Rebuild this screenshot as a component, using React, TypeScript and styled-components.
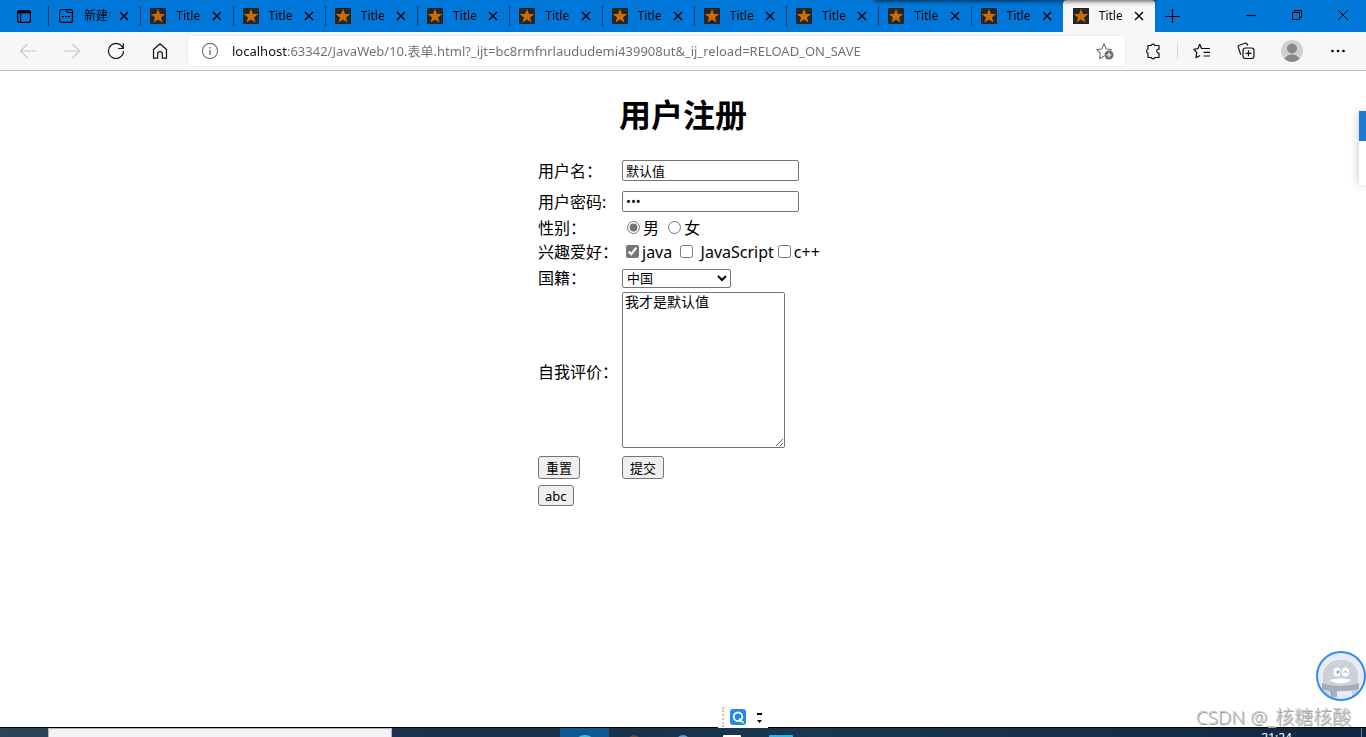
import React from "react";
import styled, { createGlobalStyle } from "styled-components";

const uiFont = `"Noto Sans", "Noto Sans CJK SC", sans-serif`;

const GlobalStyle = createGlobalStyle`
  *, *::before, *::after { box-sizing: border-box; }
  body { margin: 0; background: #fff; color: #000; font-family: ${uiFont}; font-size: 16px; }
`;

const Screen = styled.div`
  position: relative;
  display: flex;
  flex-direction: column;
  height: 100vh;
  overflow: hidden;
`;

/* ---------- tab strip ---------- */

const TitleBar = styled.header`
  display: flex;
  height: 32px;
  flex: none;
  background: #0078d9;
`;

const BareButton = styled.button`
  display: flex;
  align-items: center;
  justify-content: center;
  flex: none;
  padding: 0;
  border: 0;
  background: none;
  color: inherit;
`;

const TabActionsButton = styled(BareButton)`
  width: 48px;
`;

const TabList = styled.div`
  display: grid;
  grid-template-columns: repeat(12, minmax(0, 1fr));
  flex: 1;
  min-width: 0;
`;

const Tab = styled.div<{ $active?: boolean }>`
  position: relative;
  display: flex;
  align-items: center;
  padding: 0 9px;
  border-radius: 4px 4px 0 0;
  background: ${(p) => (p.$active ? "#f7f7f7" : "transparent")};
  font-size: 12px;
  line-height: 16px;

  &::before {
    content: "";
    position: absolute;
    left: 0;
    top: 6px;
    width: 1px;
    height: 20px;
    background: ${(p) => (p.$active ? "transparent" : "#0b3d6b")};
  }
`;

const TabIcon = styled.span`
  display: flex;
  flex: none;
  width: 18px;
  justify-content: center;
`;

const TabTitle = styled.span`
  flex: 1;
  min-width: 0;
  margin-left: 9px;
  overflow: hidden;
  white-space: nowrap;
  mask-image: linear-gradient(to right, #000 80%, transparent);
`;

const TabClose = styled(BareButton)`
  width: 14px;
  height: 16px;
  margin-left: 6px;
`;

const NewTabButton = styled(BareButton)`
  width: 34px;
`;

const WindowControls = styled.div`
  display: flex;
  flex: none;
  height: 29px;
  margin-left: 39px;
`;

const WindowButton = styled(BareButton)`
  width: 46px;
`;

const WindowShadow = styled.div`
  position: absolute;
  top: -4px;
  right: 211px;
  width: 280px;
  height: 4px;
  box-shadow: 0 0 5px 1px rgba(0, 0, 0, 0.7);
`;

/* ---------- toolbar ---------- */

const Toolbar = styled.nav`
  display: flex;
  align-items: center;
  flex: none;
  height: 39px;
  padding: 0 6px;
  border-bottom: 1px solid #bcbcbc;
  background: #f7f7f7;
`;

const ToolButton = styled(BareButton)<{ $faded?: boolean }>`
  width: 44px;
  height: 32px;
  color: ${(p) => (p.$faded ? "#c8c8c8" : "#111")};
`;

const ProfileButton = styled(ToolButton)`
  width: 48px;
`;

const AddressBar = styled.div`
  display: flex;
  align-items: center;
  flex: 1;
  min-width: 0;
  height: 30px;
  margin: 0 6px;
  border-radius: 4px;
  background: #fff;
  box-shadow: 0 0 3px rgba(0, 0, 0, 0.08);
`;

const SiteInfoButton = styled(BareButton)`
  width: 44px;
  height: 30px;
`;

const AddFavoriteButton = styled(BareButton)`
  width: 40px;
  height: 30px;
`;

const AddressInput = styled.input`
  flex: 1;
  min-width: 0;
  height: 24px;
  padding: 0 0 2px;
  border: 0;
  outline: 0;
  color: #6d6d6d;
  font-family: ${uiFont};
  font-size: 13px;
  background: linear-gradient(to right, #111 56px, #6d6d6d 56px);
  background-clip: text;
  -webkit-text-fill-color: transparent;
`;

const ToolDivider = styled.span`
  width: 1px;
  height: 16px;
  margin: 0 2px;
  background: #d4d4d4;
`;

/* ---------- page ---------- */

const Page = styled.main`
  display: flex;
  flex-direction: column;
  align-items: center;
  flex: 1;
  min-height: 0;
  overflow: hidden;
`;

const Heading = styled.h1`
  margin: 22px 0 18px;
  font-size: 32px;
  line-height: 44px;
`;

const FormTable = styled.table`
  width: 290px;
  border-collapse: collapse;
  line-height: 20px;
`;

const Row = styled.tr<{ $height: number }>`
  height: ${(p) => p.$height}px;
`;

const Cell = styled.td<{ $top?: boolean }>`
  padding: ${(p) => (p.$top ? "1px 0 0" : "0")};
  vertical-align: ${(p) => (p.$top ? "top" : "middle")};
  white-space: nowrap;
`;

const LabelCell = styled(Cell)`
  width: 84px;
`;

const TextInput = styled.input`
  display: block;
  width: 177px;
  height: 21px;
  padding: 0 2px 1px 3px;
  border: 1px solid #767676;
  border-radius: 2px;
  font-family: ${uiFont};
  font-size: 13px;
`;

const Choice = styled.input`
  accent-color: #767676;
`;

const CountrySelect = styled.select`
  display: block;
  width: 109px;
  height: 19px;
  padding: 0;
  border: 1px solid #767676;
  border-radius: 2px;
  background: #fff;
  color: #000;
  font-family: "Liberation Sans", "Noto Sans CJK SC", sans-serif;
  font-size: 13px;
`;

const Comment = styled.textarea`
  display: block;
  width: 163px;
  height: 156px;
  padding: 2px;
  border: 1px solid #767676;
  border-radius: 2px;
  font-family: "Liberation Mono", "Noto Sans CJK SC", monospace;
  font-size: 14px;
  line-height: 16px;
`;

const FormButton = styled.button`
  display: block;
  height: 23px;
  padding: 0 6px;
  border: 1px solid #767676;
  border-radius: 3px;
  background: #efefef;
  color: #000;
  font-family: ${uiFont};
  font-size: 13px;
  line-height: 20px;
`;

const ActionButton = styled(FormButton)`
  padding: 0 7px;
`;

const ShortButton = styled(FormButton)`
  height: 21px;
  line-height: 18px;
`;

/* ---------- floating pieces ---------- */

const SidePanel = styled.aside`
  position: absolute;
  top: 111px;
  right: 0;
  width: 7px;
  height: 74px;
  border-top: 30px solid #1a7bd4;
  background: #fff;
  box-shadow: 0 0 8px rgba(0, 0, 0, 0.25);
`;

const Mascot = styled.div`
  position: absolute;
  right: 0;
  bottom: 36px;
  width: 50px;
  height: 50px;
`;

const Watermark = styled.div`
  position: absolute;
  right: 15px;
  bottom: 8px;
  color: #c6c6c6;
  font-size: 19px;
  font-weight: 300;
  line-height: 24px;
  text-shadow: 1px 1px 0 #9a9a9a;
  white-space: nowrap;
`;

const ImeBar = styled.div`
  position: absolute;
  left: calc(50% + 35px);
  bottom: 9px;
  display: flex;
  align-items: center;
  width: 50px;
  height: 22px;
  padding-left: 4px;
  background: #fff;
`;

const ImeGrip = styled.span`
  height: 20px;
  margin-right: 6px;
  border-left: 2px dotted #c4c4c4;
`;

/* ---------- taskbar ---------- */

const Taskbar = styled.footer`
  display: flex;
  flex: none;
  height: 10px;
  overflow: hidden;
  border-top: 1px solid #000;
  background: linear-gradient(to right, #2b4459, #17304c 35%, #1b3650 60%, #0f2742);
`;

const TaskSearch = styled.div`
  width: 344px;
  height: 40px;
  margin-left: 48px;
  border: 1px solid #b5b5b5;
  background: #f2f3f6;
`;

const TaskApps = styled.div`
  display: flex;
  margin-left: 168px;
`;

const TaskApp = styled.span<{ $active?: boolean }>`
  display: flex;
  justify-content: center;
  width: 49px;
  padding-top: 7px;
  background: ${(p) => (p.$active ? "#0f5893" : "transparent")};
`;

const TaskGlyph = styled.span<{ $color: string; $width: number; $square?: boolean }>`
  width: ${(p) => p.$width}px;
  height: 24px;
  border-radius: ${(p) => (p.$square ? "1px" : "8px")};
  background: ${(p) => p.$color};
`;

const Clock = styled.time`
  margin-left: auto;
  padding-top: 2px;
  color: #fff;
  font-size: 12px;
  line-height: 16px;
`;

const DesktopEdge = styled.span`
  width: 5px;
  margin-left: 69px;
  border-left: 1px solid #6c7c8c;
`;

const Icon = ({ size = 18, children }: { size?: number; children: React.ReactNode }) => (
  <svg
    width={size}
    height={size}
    viewBox={`0 0 ${size} ${size}`}
    fill="none"
    stroke="currentColor"
    strokeWidth="1.2"
    strokeLinejoin="round"
    aria-hidden="true"
  >
    {children}
  </svg>
);

const StarFavicon = () => (
  <svg width="16" height="16" viewBox="0 0 16 16" aria-hidden="true">
    <rect width="16" height="16" fill="#252525" />
    <path d="M8 .8l1.900 5.100 5.300.2-4.200 3.300 1.500 5.200L8 11.600l-4.500 3 1.500-5.200L.8 6.100l5.300-.2z" fill="#cc6c08" />
  </svg>
);

const NewPageIcon = () => (
  <Icon size={16}>
    <rect x="1.6" y="1.6" width="12.8" height="12.8" rx="2" />
    <path d="M8.500 1.600v1.400q0 1.500 1.500 1.500h4.400M4 8.700h2M7 8.700h2M10 8.700h2" />
  </Icon>
);

const CloseIcon = () => (
  <Icon size={10}>
    <path d="M1 1l8 8M9 1L1 9" strokeWidth="1.4" />
  </Icon>
);

const titles = ["新建标签页", ...Array.from({ length: 11 }, () => "Title")];

export default function App() {
  return (
    <>
      <GlobalStyle />
      <Screen>
        <TitleBar>
          <TabActionsButton aria-label="Tab actions">
            <Icon size={16}>
              <rect x="1.6" y="2.6" width="12.8" height="11.8" rx="2" />
              <path d="M2 4h12" strokeWidth="2.6" />
              <path d="M4.6 5v9" />
            </Icon>
          </TabActionsButton>
          <TabList>
            {titles.map((title, i) => (
              <Tab key={i} $active={i === titles.length - 1}>
                <TabIcon>{i === 0 ? <NewPageIcon /> : <StarFavicon />}</TabIcon>
                <TabTitle>{title}</TabTitle>
                <TabClose aria-label="Close tab">
                  <CloseIcon />
                </TabClose>
              </Tab>
            ))}
          </TabList>
          <NewTabButton aria-label="New tab">
            <Icon size={16}>
              <path d="M8.5 1v14M1 8.5h15" />
            </Icon>
          </NewTabButton>
          <WindowControls>
            <WindowButton aria-label="Minimize">
              <Icon size={12}>
                <path d="M1 6.5h10" />
              </Icon>
            </WindowButton>
            <WindowButton aria-label="Restore">
              <Icon size={12}>
                <path d="M1.5 3.5h7v7h-7zM3.5 3.5v-2h7v7h-2" strokeWidth="1" />
              </Icon>
            </WindowButton>
            <WindowButton aria-label="Close">
              <Icon size={12}>
                <path d="M1 1l10 10M11 1L1 11" strokeWidth="1" />
              </Icon>
            </WindowButton>
          </WindowControls>
        </TitleBar>
        <WindowShadow />

        <Toolbar>
          <ToolButton $faded aria-label="Back">
            <Icon>
              <path d="M17 9H1.5M8.5 2l-7 7 7 7" />
            </Icon>
          </ToolButton>
          <ToolButton $faded aria-label="Forward">
            <Icon>
              <path d="M1 9h15.500M9.500 2l7 7-7 7" />
            </Icon>
          </ToolButton>
          <ToolButton aria-label="Refresh">
            <Icon>
              <path d="M16.300 7.200A7.500 7.500 0 1 0 16.500 9M16.300 1.500v5h-5" />
            </Icon>
          </ToolButton>
          <ToolButton aria-label="Home">
            <Icon>
              <path d="M2.500 7.500L9 1.800l6.500 5.700v8.700h-4.200v-4.500c0-1.300-.8-2-2.300-2s-2.300.7-2.300 2v4.500H2.500z" />
            </Icon>
          </ToolButton>
          <AddressBar>
            <SiteInfoButton aria-label="Site information">
              <svg width="18" height="18" viewBox="0 0 18 18" fill="none" stroke="#767676" aria-hidden="true">
                <circle cx="9" cy="9" r="7.600" strokeWidth="1.200" />
                <path d="M9 8v5M9 5v1.500" strokeWidth="1.500" />
              </svg>
            </SiteInfoButton>
            <AddressInput
              aria-label="Address"
              defaultValue="localhost:63342/JavaWeb/10.表单.html?_ijt=bc8rmfnrlaududemi439908ut&_ij_reload=RELOAD_ON_SAVE"
            />
            <AddFavoriteButton aria-label="Add to favorites">
              <svg width="18" height="18" viewBox="0 0 18 18" fill="none" stroke="#767676" aria-hidden="true">
                <path
                  d="M8 14.200l-4.500 2.300.9-5L.8 7.700l5-.7L8 1.800 10.300 7l5 .7-1 1"
                  strokeWidth="1.200"
                  strokeLinejoin="round"
                />
                <circle cx="13" cy="13" r="4.500" fill="#6b6b6b" stroke="none" />
                <path d="M13 10.500v5M10.500 13h5" stroke="#fff" strokeWidth="1.200" />
              </svg>
            </AddFavoriteButton>
          </AddressBar>
          <ToolButton aria-label="Extensions">
            <Icon>
              <path d="M4 3.500h3.200a2 2 0 0 1 3.800 0h4v3.700h-1a2 2 0 0 0 0 3.800h1v4.500h-4a2 2 0 0 1-3.800 0H4v-4.300a2.100 2.100 0 0 1 0-4z" />
            </Icon>
          </ToolButton>
          <ToolDivider />
          <ToolButton aria-label="Favorites">
            <Icon>
              <path d="M8.500 6.500L6.700 2.300 4.900 6.700.8 7.300l3 3.100-.8 5.300 4.200-2.200M6.700 2.300l2 4.200H17M10.500 10.300H17M10.500 14H17" />
            </Icon>
          </ToolButton>
          <ToolButton aria-label="Collections">
            <Icon>
              <rect x="6" y="6" width="11" height="10.500" rx="2.500" />
              <path d="M11.500 8.300v6M8.500 11.300h6M3.800 12.800L1.300 5.200c-.3-1 .2-1.700 1-2l5.700-2c1-.3 1.800 0 2.200 1l.5 1.400" />
            </Icon>
          </ToolButton>
          <ProfileButton aria-label="Profile">
            <svg width="22" height="22" viewBox="0 0 22 22" aria-hidden="true">
              <circle cx="11" cy="11" r="11" fill="#d2d0ce" />
              <circle cx="11" cy="8.500" r="5" fill="#8a8886" />
              <path d="M3.500 19c1-3 4-4.500 7.500-4.500s6.500 1.500 7.500 4.500a11 11 0 0 1-15 0z" fill="#8a8886" />
            </svg>
          </ProfileButton>
          <ToolButton aria-label="Settings and more">
            <svg width="18" height="18" viewBox="0 0 18 18" aria-hidden="true">
              <circle cx="3.500" cy="9" r="1.300" />
              <circle cx="9" cy="9" r="1.300" />
              <circle cx="14.500" cy="9" r="1.300" />
            </svg>
          </ToolButton>
        </Toolbar>

        <Page>
          <Heading>用户注册</Heading>
          <form onSubmit={(e) => e.preventDefault()}>
            <FormTable>
              <tbody>
                <Row $height={31}>
                  <LabelCell>
                    <label htmlFor="username">用户名：</label>
                  </LabelCell>
                  <Cell>
                    <TextInput id="username" type="text" defaultValue="默认值" />
                  </Cell>
                </Row>
                <Row $height={31}>
                  <LabelCell>
                    <label htmlFor="password">用户密码:</label>
                  </LabelCell>
                  <Cell>
                    <TextInput id="password" type="password" defaultValue="abc" />
                  </Cell>
                </Row>
                <Row $height={22}>
                  <LabelCell>性别：</LabelCell>
                  <Cell>
                    <label>
                      <Choice type="radio" name="sex" defaultChecked />男
                    </label>{" "}
                    <label>
                      <Choice type="radio" name="sex" />女
                    </label>
                  </Cell>
                </Row>
                <Row $height={26}>
                  <LabelCell>兴趣爱好：</LabelCell>
                  <Cell>
                    <label>
                      <Choice type="checkbox" defaultChecked />java
                    </label>{" "}
                    <label>
                      <Choice type="checkbox" /> JavaScript
                    </label>
                    <label>
                      <Choice type="checkbox" />c++
                    </label>
                  </Cell>
                </Row>
                <Row $height={26}>
                  <LabelCell>
                    <label htmlFor="country">国籍：</label>
                  </LabelCell>
                  <Cell>
                    <CountrySelect id="country" defaultValue="cn">
                      <option value="cn">中国</option>
                    </CountrySelect>
                  </Cell>
                </Row>
                <Row $height={162}>
                  <LabelCell>
                    <label htmlFor="comment">自我评价：</label>
                  </LabelCell>
                  <Cell $top>
                    <Comment id="comment" defaultValue="我才是默认值" />
                  </Cell>
                </Row>
                <Row $height={29}>
                  <LabelCell>
                    <ActionButton type="reset">重置</ActionButton>
                  </LabelCell>
                  <Cell>
                    <ActionButton type="submit">提交</ActionButton>
                  </Cell>
                </Row>
                <Row $height={27}>
                  <LabelCell>
                    <ShortButton type="button">abc</ShortButton>
                  </LabelCell>
                  <Cell />
                </Row>
              </tbody>
            </FormTable>
          </form>
        </Page>

        <Taskbar>
          <TaskSearch />
          <TaskApps>
            <TaskApp $active>
              <TaskGlyph $color="#2fc3d6" $width={18} />
            </TaskApp>
            <TaskApp>
              <TaskGlyph $color="#6b4a3a" $width={12} />
            </TaskApp>
            <TaskApp>
              <TaskGlyph $color="#6d9cc8" $width={14} />
            </TaskApp>
            <TaskApp>
              <TaskGlyph $color="#ffffff" $width={18} $square />
            </TaskApp>
            <TaskApp>
              <TaskGlyph $color="#22b8ee" $width={24} $square />
            </TaskApp>
          </TaskApps>
          <Clock>21:24</Clock>
          <DesktopEdge />
        </Taskbar>

        <SidePanel />
        <Mascot>
          <svg width="50" height="50" viewBox="0 0 50 50" aria-hidden="true">
            <defs>
              <clipPath id="mascot-clip">
                <circle cx="25" cy="25" r="24" />
              </clipPath>
            </defs>
            <circle cx="25" cy="25" r="24" fill="#e9ebf0" />
            <g clipPath="url(#mascot-clip)">
              <path d="M7 36V26C7 15 14 9 24.500 9S42 15 42 26v24H7z" fill="#ccd0d8" />
              <path d="M13 39h23v11H13z" fill="#e9ebf0" />
              <path d="M6 32c10 4 27 4 37 0v6c-10 3-27 3-37 0z" fill="#a4adb9" />
              <path d="M13 38h8v8h-6z" fill="#a4adb9" />
              <ellipse cx="21" cy="21" rx="3.600" ry="4.500" fill="#fff" />
              <ellipse cx="29.500" cy="21" rx="3.600" ry="4.500" fill="#fff" />
              <circle cx="22" cy="21" r="1.500" fill="#8f98a6" />
              <path d="M27.500 21.500q2-2 4 0" stroke="#8f98a6" fill="none" />
              <path d="M13.500 29c7-2 15-2 22 0-6 4.500-16 4.500-22 0z" fill="#fff" />
            </g>
            <circle cx="25" cy="25" r="24" fill="none" stroke="#2f8cf5" strokeWidth="2" />
          </svg>
        </Mascot>
        <Watermark>CSDN @_核糖核酸</Watermark>
        <ImeBar>
          <ImeGrip />
          <svg width="38" height="16" viewBox="0 0 38 16" aria-hidden="true">
            <rect width="16" height="16" rx="3" fill="#2186f5" />
            <circle cx="8" cy="7.800" r="4.300" fill="none" stroke="#fff" strokeWidth="1.800" />
            <path d="M9 9.500l3 3.500" stroke="#fff" strokeWidth="1.800" />
            <rect x="11.500" y="12" width="2.500" height="2.500" fill="#b9f21d" />
            <path d="M27 4h5v2h-5zM27 11h5l-2.500 3z" fill="#000" />
          </svg>
        </ImeBar>
      </Screen>
    </>
  );
}
